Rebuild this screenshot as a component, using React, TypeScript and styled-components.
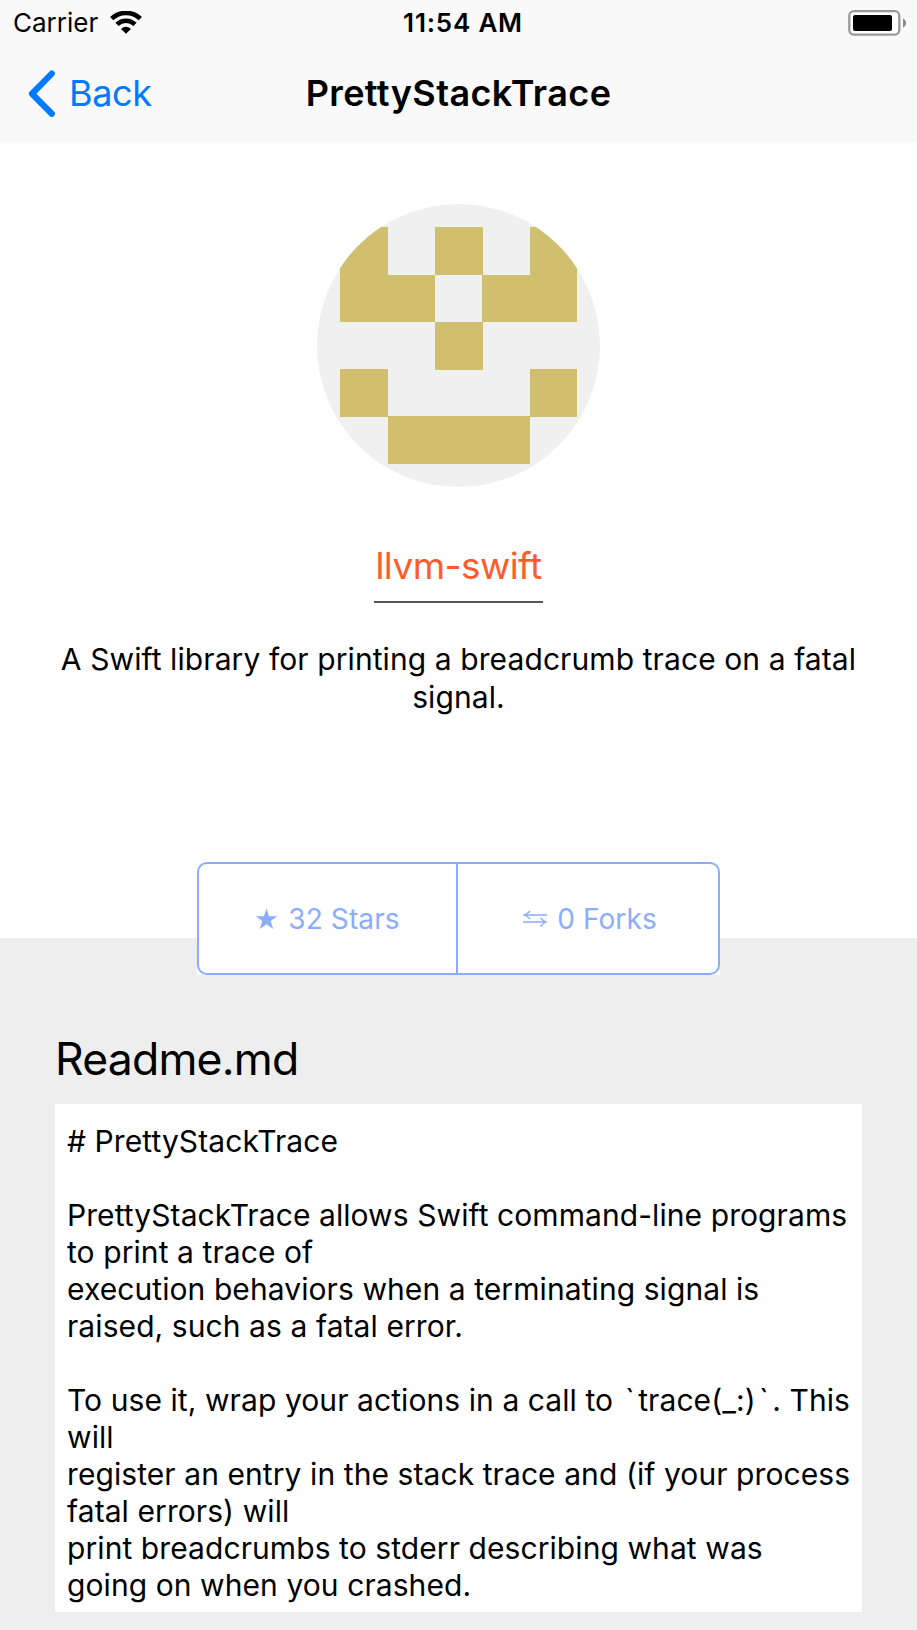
import React from 'react';
import styled, { createGlobalStyle } from 'styled-components';

const Global = createGlobalStyle`
  * { box-sizing: border-box; }
  body { margin: 0; background: #fff; font-family: Inter, sans-serif; color: #000; }
`;
const Screen = styled.main`
  width: 917px;
  height: 1630px;
  overflow: hidden;
  display: flex;
  flex-direction: column;
  background: #eee;
`;
const Header = styled.header`
  height: 142px;
  flex: none;
  background: #f9f9f9;
`;
const StatusBar = styled.div`
  height: 45px;
  padding: 0 11px 0 13px;
  display: grid;
  grid-template-columns: 1fr auto 1fr;
  align-items: center;
`;
const Carrier = styled.div`
  display: flex;
  align-items: center;
  gap: 12px;
  font-size: 26px;
`;
const Clock = styled.div`
  padding-left: 7px;
  font-size: 26px;
  font-weight: 600;
  letter-spacing: 0.8px;
`;
const BatteryIcon = styled.svg`
  justify-self: end;
`;
const NavBar = styled.nav`
  height: 95px;
  padding: 0 28px;
  display: grid;
  grid-template-columns: 1fr auto 1fr;
  align-items: center;
`;
const Back = styled.a`
  display: flex;
  align-items: center;
  gap: 13px;
  color: #007aff;
  font-size: 36px;
  letter-spacing: -0.4px;
`;
const Title = styled.h1`
  margin: 0;
  font-size: 36px;
  font-weight: 600;
  letter-spacing: 0.4px;
`;
const Profile = styled.section`
  height: 796px;
  flex: none;
  padding-top: 62px;
  background: #fff;
  display: flex;
  flex-direction: column;
  align-items: center;
`;
const Avatar = styled.svg`
  flex: none;
  display: block;
`;
const Owner = styled.a`
  flex: none;
  margin-top: 53px;
  height: 63px;
  width: 169px;
  text-align: center;
  border-bottom: 2px solid #555755;
  color: #ff5a2b;
  font-size: 37px;
  letter-spacing: -0.55px;
  line-height: 52px;
`;
const Description = styled.p`
  flex: none;
  margin: 37px 0 0;
  width: 820px;
  text-align: center;
  font-size: 30px;
  letter-spacing: 0.09px;
  line-height: 38px;
`;
const StatsBackdrop = styled.div`
  flex: none;
  margin-top: 146px;
  width: 523px;
  height: 113px;
  background: #fff;
`;
const Stats = styled.div`
  height: 100%;
  display: grid;
  grid-template-columns: 257px 1fr;
  border: 2px solid #8aadff;
  border-radius: 10px;
`;
const Stat = styled.div`
  display: flex;
  align-items: center;
  justify-content: center;
  gap: 10px;
  color: #8aadff;
  font-size: 28px;
  letter-spacing: 0.1px;
  & + & {
    padding-left: 4px;
    border-left: 2px solid #8aadff;
  }
`;
const Readme = styled.section`
  flex: 1;
  padding: 94px 55px 0;
`;
const Heading = styled.h2`
  margin: 0;
  height: 72px;
  font-size: 44.5px;
  line-height: 54px;
  font-weight: 400;
  letter-spacing: -0.8px;
`;
const Content = styled.div`
  height: 508px;
  padding: 19px 12px;
  background: #fff;
  font-size: 30px;
  line-height: 37px;
  letter-spacing: 0.08px;
`;
const Line = styled.div`
  height: 37px;
  display: flex;
  white-space: pre;
`;
const Tick = styled.span`
  width: 17px;
  text-align: center;
`;

const Wifi = () => (
  <svg width="32" height="23" viewBox="0 0 32 23">
    <g fill="none" stroke="#000" strokeWidth="4.5">
      <path d="M1.7 7.7A20.5 20.5 0 0 1 30.3 7.7" />
      <path d="M7 13.4A12.8 12.8 0 0 1 25 13.4" />
    </g>
    <path d="M11 18Q16 13.6 21 18L16 22.8Z" />
  </svg>
);

const Battery = () => (
  <BatteryIcon width="58" height="26" viewBox="0 0 58 26">
    <rect x="1.3" y="1.2" width="50" height="23.4" rx="4.5" fill="#fff" stroke="#999" strokeWidth="2.3" />
    <rect x="5" y="5" width="39" height="16" rx="2" />
    <path d="M55 8.5Q58 10 58 13Q58 16 55 17.5Z" fill="#8c8c8c" />
  </BatteryIcon>
);

const Chevron = () => (
  <svg width="28" height="48" viewBox="0 0 28 48">
    <path d="M23.8 4.6L4 24.7L23.8 44.8" fill="none" stroke="#007aff" strokeWidth="6.2" strokeLinecap="round" strokeLinejoin="round" />
  </svg>
);

const Identicon = () => (
  <Avatar width="283" height="283" viewBox="0 0 283 283">
    <defs>
      <clipPath id="round"><circle cx="141.5" cy="141.5" r="141.5" /></clipPath>
    </defs>
    <g clipPath="url(#round)">
      <rect width="283" height="283" fill="#f0f0f0" />
      <path
        fill="#cfbf6e"
        shapeRendering="crispEdges"
        d="M23 23H71V71H118V118H23ZM118 23H166V71H118ZM213 23H260V118H165V71H213ZM118 118H166V166H118ZM23 165H71V213H23ZM213 165H260V213H213ZM71 212H213V260H71Z"
      />
    </g>
  </Avatar>
);

const Star = () => (
  <svg width="23" height="22" viewBox="0 0 23 22">
    <path fill="#8aadff" d="M11.5 .5L14.1 8.3H22.3L15.7 13.1L18.2 21L11.5 16.2L4.8 21L7.3 13.1L.7 8.3H8.9Z" />
  </svg>
);

const Arrows = () => (
  <svg width="24" height="18" viewBox="0 0 24 18">
    <g fill="none" stroke="#8aadff" strokeWidth="1.3">
      <path d="M24 5H1M7 1Q4.5 4 1 5Q4.5 6 7 9" />
      <path d="M0 12H23M17.5 8Q20 11 23.2 12Q20 13 17.5 16.5" />
    </g>
  </svg>
);

const lines = [
  '# PrettyStackTrace',
  '',
  'PrettyStackTrace allows Swift command-line programs',
  'to print a trace of',
  'execution behaviors when a terminating signal is',
  'raised, such as a fatal error.',
  '',
  'To use it, wrap your actions in a call to `trace(_:)`. This',
  'will',
  'register an entry in the stack trace and (if your process',
  'fatal errors) will',
  'print breadcrumbs to stderr describing what was',
  'going on when you crashed.',
];

export default function App() {
  return (
    <Screen>
      <Global />
      <Header>
        <StatusBar>
          <Carrier>Carrier <Wifi /></Carrier>
          <Clock>11:54 AM</Clock>
          <Battery />
        </StatusBar>
        <NavBar>
          <Back><Chevron />Back</Back>
          <Title>PrettyStackTrace</Title>
        </NavBar>
      </Header>
      <Profile>
        <Identicon />
        <Owner>llvm-swift</Owner>
        <Description>A Swift library for printing a breadcrumb trace on a fatal signal.</Description>
        <StatsBackdrop>
          <Stats>
            <Stat><Star />32 Stars</Stat>
            <Stat><Arrows />0 Forks</Stat>
          </Stats>
        </StatsBackdrop>
      </Profile>
      <Readme>
        <Heading>Readme.md</Heading>
        <Content>
          {lines.map((line, i) => (
            <Line key={i}>
              {line.split(/(`)/).map((part, j) =>
                part === '`' ? <Tick key={j}>{part}</Tick> : <span key={j}>{part}</span>
              )}
            </Line>
          ))}
        </Content>
      </Readme>
    </Screen>
  );
}
